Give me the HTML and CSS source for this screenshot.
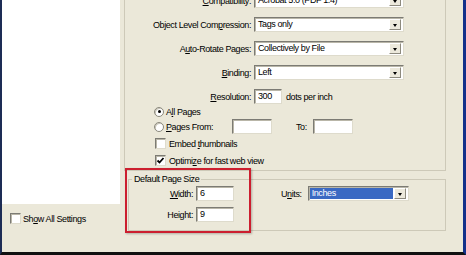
FILE: index.html
```html
<!DOCTYPE html>
<html lang="en">
<head>
    <meta charset="UTF-8">
    <meta name="viewport" content="width=device-width, initial-scale=1.0">
    <title>PDF Settings</title>
    <link rel="stylesheet" href="styles.css">
</head>
<body>
    <div class="window">
        <div class="side">
            <div class="tree"></div>
            <div class="showall">
                <span class="chk"></span>
                <span>Sh<u>o</u>w All Settings</span>
            </div>
        </div>
        <div class="main">
            <div class="upper">
                <div class="form">
                    <span class="lbl"><u>C</u>ompatibility:</span>
                    <div class="select"><span class="val">Acrobat 5.0 (PDF 1.4)</span><span class="btn"></span></div>
                    <span class="lbl">Object Level Com<u>p</u>ression:</span>
                    <div class="select"><span class="val">Tags only</span><span class="btn"></span></div>
                    <span class="lbl">A<u>u</u>to-Rotate Pages:</span>
                    <div class="select"><span class="val">Collectively by File</span><span class="btn"></span></div>
                    <span class="lbl"><u>B</u>inding:</span>
                    <div class="select"><span class="val">Left</span><span class="btn"></span></div>
                    <span class="lbl"><u>R</u>esolution:</span>
                    <div class="field">
                        <span class="input res">300</span>
                        <span class="unit">dots per inch</span>
                    </div>
                </div>
                <div class="opts">
                    <div class="opt"><span class="radio on"></span><span>A<u>l</u>l Pages</span></div>
                    <div class="opt">
                        <span class="from"><span class="radio"></span><span><u>P</u>ages From:</span></span>
                        <span class="input page"></span>
                        <span class="to">To:</span>
                        <span class="input page"></span>
                    </div>
                    <div class="opt gap"><span class="chk"></span><span>Embed <u>t</u>humbnails</span></div>
                    <div class="opt"><span class="chk">
                        <svg width="9" height="9" viewBox="0 0 9 9"><polyline points="1.5,4.5 3.5,6.5 7.5,2" fill="none" stroke="#000" stroke-width="1.8"/></svg>
                    </span><span>Optimi<u>z</u>e for fast web view</span></div>
                </div>
            </div>
            <fieldset class="lower">
                <legend>Default Page Size</legend>
                <div class="sizes">
                    <div class="dims">
                        <span class="lbl"><u>W</u>idth:</span>
                        <span class="input">6</span>
                        <span class="lbl">Height:</span>
                        <span class="input">9</span>
                    </div>
                    <div class="units">
                        <span>U<u>n</u>its:</span>
                        <div class="select unitsel"><span class="val picked">Inches</span><span class="btn"></span></div>
                    </div>
                </div>
            </fieldset>
        </div>
        <div class="mark"></div>
    </div>
</body>
</html>
```

FILE: styles.css
```css
* {
    box-sizing: border-box;
}
body {
    margin: 0;
    font-family: "Liberation Sans", Arial, sans-serif;
    font-size: 9px;
    letter-spacing: -0.4px;
    color: #000;
    background-color: #ebe8d9;
}
u {
    text-decoration: underline;
}
.window {
    position: relative;
    display: flex;
    width: 466px;
    height: 255px;
    overflow: hidden;
    background-color: #ebe8d9;
    border-left: 2px solid #1d2c55;
    border-right: 3px solid #13308a;
    border-bottom: 3px solid #111;
}
.side {
    width: 120px;
    flex: none;
}
.tree {
    height: 204px;
    margin-right: 2px;
    background-color: #fff;
}
.showall {
    display: flex;
    align-items: center;
    gap: 2px;
    margin: 9px 0 0 8px;
}
.main {
    flex: 1;
}
.upper {
    display: flow-root;
    width: 322px;
    height: 171px;
    margin-left: 2px;
    border: 1px solid #cdc9b8;
    border-top: none;
}
.form {
    display: grid;
    grid-template-columns: 126px 150px;
    grid-auto-rows: 15px;
    column-gap: 3px;
    row-gap: 9px;
    margin-top: -7px;
}
.lbl {
    justify-self: end;
    align-self: center;
    white-space: nowrap;
}
.select {
    display: flex;
    height: 15px;
    background-color: #fff;
    border: 1px solid;
    border-color: #7c7b74 #dedbcc #dedbcc #7c7b74;
    box-shadow: inset 1px 1px 0 #b9b6a8;
}
.select .val {
    flex: 1;
    padding-left: 3px;
    line-height: 13px;
    white-space: nowrap;
}
.select .btn {
    position: relative;
    width: 12px;
    margin: 1px 2px 1px 0;
    background-color: #ece9dc;
    border: 1px solid;
    border-color: #fff #8d8a7e #8d8a7e #fff;
}
.select .btn::after {
    content: "";
    position: absolute;
    left: 3px;
    top: 4px;
    border-left: 2.5px solid transparent;
    border-right: 2.5px solid transparent;
    border-top: 3px solid #000;
}
.field {
    display: flex;
    align-items: center;
}
.input {
    display: block;
    height: 15px;
    padding-left: 3px;
    line-height: 13px;
    background-color: #fff;
    border: 1px solid;
    border-color: #7c7b74 #dedbcc #dedbcc #7c7b74;
    box-shadow: inset 1px 1px 0 #b9b6a8;
}
.res {
    width: 28px;
}
.unit {
    margin-left: 4px;
}
.opts {
    padding-left: 29px;
}
.opt {
    display: flex;
    align-items: center;
    height: 15px;
}
.opt.gap {
    margin-top: 2px;
}
.opt.gap + .opt {
    margin-top: 2px;
}
.radio {
    display: inline-block;
    flex: none;
    width: 10px;
    height: 10px;
    margin-right: 2px;
    border-radius: 50%;
    background-color: #fff;
    border: 1px solid #8a887c;
    box-shadow: inset 1px 1px 0 #c9c6b8;
    position: relative;
}
.radio.on::after {
    content: "";
    position: absolute;
    left: 2.5px;
    top: 2.5px;
    width: 3px;
    height: 3px;
    border-radius: 50%;
    background-color: #000;
}
.from {
    display: flex;
    align-items: center;
    width: 78px;
}
.page {
    width: 40px;
}
.to {
    margin-left: 24px;
    width: 17px;
}
.chk {
    display: flex;
    align-items: center;
    justify-content: center;
    flex: none;
    width: 11px;
    height: 11px;
    margin: 0 3px 0 1px;
    background-color: #fff;
    border: 1px solid;
    border-color: #7c7b74 #dedbcc #dedbcc #7c7b74;
    box-shadow: inset 1px 1px 0 #b9b6a8;
}
.showall .chk {
    margin: 0;
}
.lower {
    width: 318px;
    height: 57px;
    margin: 3px 0 0 6px;
    padding: 0;
    border: 1px solid #cdc9b8;
}
.lower legend {
    margin-left: 3px;
    padding: 0 2px;
    line-height: 11px;
}
.sizes {
    display: flex;
    align-items: flex-start;
    margin-top: 1px;
}
.dims {
    display: grid;
    grid-template-columns: 64px 38px;
    grid-auto-rows: 15px;
    column-gap: 3px;
    row-gap: 6px;
}
.units {
    display: flex;
    align-items: center;
    gap: 6px;
    margin-left: 47px;
}
.unitsel {
    width: 101px;
}
.unitsel .val.picked {
    margin: 1px;
    padding-left: 2px;
    line-height: 11px;
    color: #fff;
    background-color: #3a69c3;
}
.mark {
    position: absolute;
    left: 123px;
    top: 168px;
    width: 126px;
    height: 65px;
    border: 2px solid #cc1f2f;
    box-shadow: 1px 1px 2px rgba(0, 0, 0, 0.25);
}
```
